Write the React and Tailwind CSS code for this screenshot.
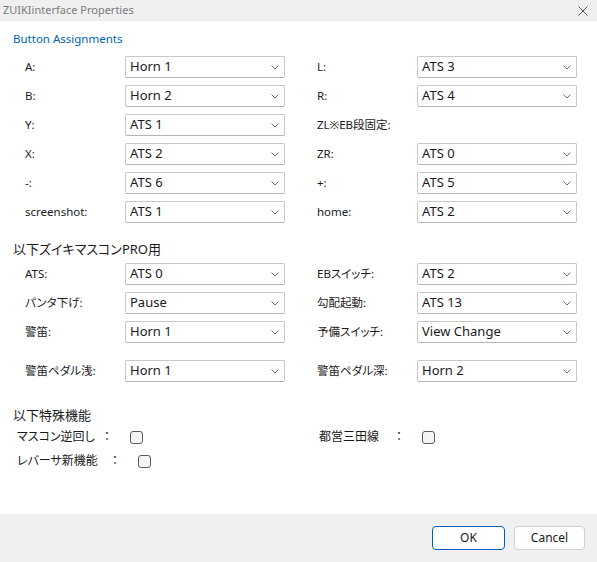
import { useState } from 'react'

const font = { fontFamily: '"Noto Sans", "Noto Sans CJK JP", sans-serif' }

function Chevron() {
  return (
    <svg width="8" height="5" viewBox="0 0 8 5" className="text-[#707070]">
      <path d="M0.5 0.5 L4 4 L7.5 0.5" fill="none" stroke="currentColor" strokeWidth="1" />
    </svg>
  )
}

function Select({ value }) {
  return (
    <div className="w-[160px] h-[22px] flex items-center justify-between pl-[4px] pr-[5px] bg-white border border-[#c8c8c8] border-b-[#b4b4b4] rounded-[2px] text-[13px] text-[#1a1a1a]">
      <span>{value}</span>
      <Chevron />
    </div>
  )
}

function Field({ label, value }) {
  return (
    <div className="flex items-center h-[22px]">
      <span className="w-[100px] text-[11.5px] text-[#1a1a1a]">{label}</span>
      {value && <Select value={value} />}
    </div>
  )
}

function Row({ left, right, className = '' }) {
  return (
    <div className={`grid grid-cols-[292px_1fr] pl-[25px] ${className}`}>
      <Field label={left[0]} value={left[1]} />
      <Field label={right[0]} value={right[1]} />
    </div>
  )
}

function Check({ label, width }) {
  const [on, setOn] = useState(false)
  return (
    <div className="flex items-center h-[20px] text-[12px] text-[#1a1a1a]">
      <span className={width}>{label}</span>
      <span className="w-[12px] text-center">：</span>
      <button
        onClick={() => setOn(!on)}
        className="ml-[17px] w-[13px] h-[13px] rounded-[3px] border border-[#5a5a5a] bg-[#f5f5f5]"
      />
    </div>
  )
}

export default function App() {
  return (
    <div className="w-[597px] h-[562px] flex flex-col bg-white [font-feature-settings:'palt']" style={font}>
      <div className="h-[21px] bg-[#f0f0f0] flex items-center justify-between pl-[3px] pr-[9px]">
        <span className="text-[11px] text-[#7a7a7a]">ZUIKIinterface Properties</span>
        <svg width="10" height="10" viewBox="0 0 10 10" className="text-[#555]">
          <path d="M0.5 0.5 L9.5 9.5 M9.5 0.5 L0.5 9.5" stroke="currentColor" strokeWidth="1" />
        </svg>
      </div>

      <div className="flex-1 flex flex-col">
        <div className="pl-[13px] pt-[9px] h-[35px] text-[11.5px] text-[#0063b1]">Button Assignments</div>
        <div className="flex flex-col gap-[7px]">
          <Row left={['A:', 'Horn 1']} right={['L:', 'ATS 3']} />
          <Row left={['B:', 'Horn 2']} right={['R:', 'ATS 4']} />
          <Row left={['Y:', 'ATS 1']} right={['ZL※EB段固定:', null]} />
          <Row left={['X:', 'ATS 2']} right={['ZR:', 'ATS 0']} />
          <Row left={['-:', 'ATS 6']} right={['+:', 'ATS 5']} />
          <Row left={['screenshot:', 'ATS 1']} right={['home:', 'ATS 2']} />
        </div>

        <div className="pl-[13px] mt-[17px] h-[20px] flex items-center text-[13px] text-[#1a1a1a]">以下ズイキマスコンPRO用</div>
        <div className="flex flex-col gap-[7px] mt-[3px]">
          <Row left={['ATS:', 'ATS 0']} right={['EBスイッチ:', 'ATS 2']} />
          <Row left={['パンタ下げ:', 'Pause']} right={['勾配起動:', 'ATS 13']} />
          <Row left={['警笛:', 'Horn 1']} right={['予備スイッチ:', 'View Change']} />
          <Row className="mt-[10px]" left={['警笛ペダル浅:', 'Horn 1']} right={['警笛ペダル深:', 'Horn 2']} />
        </div>

        <div className="pl-[13px] mt-[24px] h-[20px] flex items-center text-[13px] text-[#1a1a1a]">以下特殊機能</div>
        <div className="grid grid-cols-[302px_1fr] pl-[17px] mt-[1px]">
          <Check label="マスコン逆回し" width="w-[84px]" />
          <Check label="都営三田線" width="w-[74px]" />
        </div>
        <div className="pl-[17px] mt-[4px]">
          <Check label="レバーサ新機能" width="w-[92px]" />
        </div>
      </div>

      <div className="h-[48px] bg-[#f0f0f0] flex items-center justify-end gap-[9px] pr-[12px]">
        <button className="w-[73px] h-[24px] rounded-[4px] bg-white border border-[#005fb8] text-[12px] text-[#1a1a1a]">OK</button>
        <button className="w-[71px] h-[24px] rounded-[4px] bg-white border border-[#d0d0d0] text-[12px] text-[#1a1a1a]">Cancel</button>
      </div>
    </div>
  )
}
